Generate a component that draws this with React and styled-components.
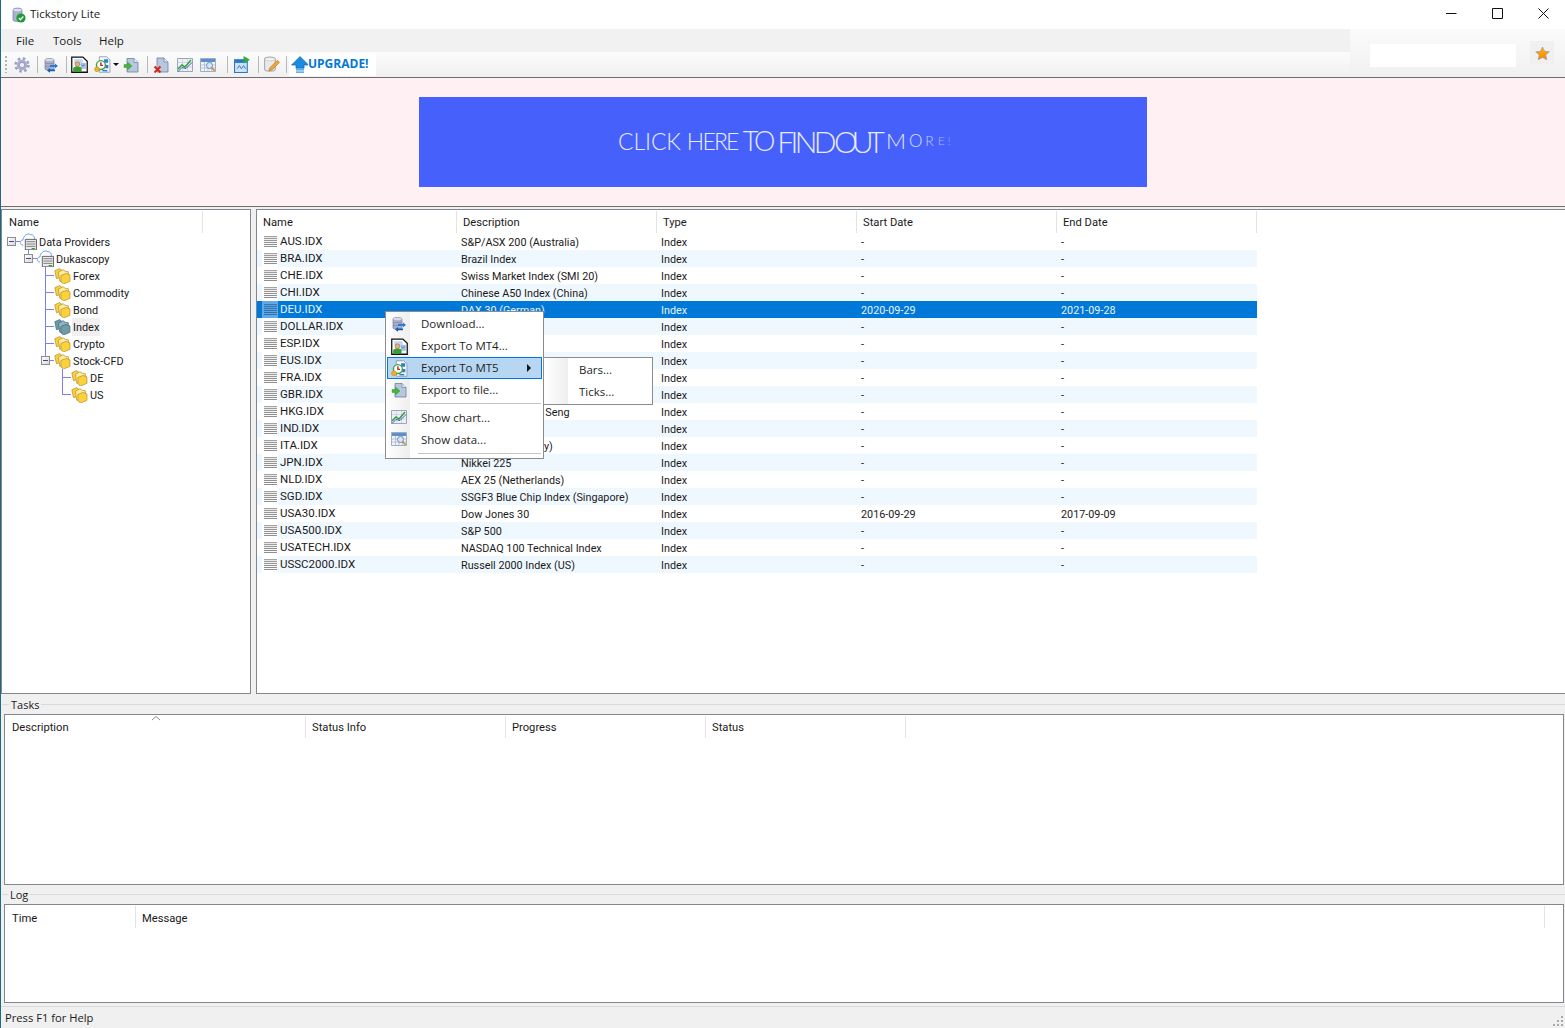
import React from "react";
import styled, { createGlobalStyle } from "styled-components";

const GlobalStyle = createGlobalStyle`
  html, body {
    margin: 0;
    padding: 0;
    background: #f0f0f0;
  }
  * {
    box-sizing: border-box;
  }
`;

const uiFont = `"Open Sans", "Liberation Sans", sans-serif`;

const Window = styled.div`
  position: relative;
  width: 1565px;
  height: 1028px;
  display: flex;
  flex-direction: column;
  overflow: hidden;
  border-left: 1px solid #1d6b82;
  background: #f0f0f0;
  color: #1a1a1a;
  font-family: Roboto, "Liberation Sans", sans-serif;
  font-size: 11.2px;
  line-height: 17px;
`;

const TitleBar = styled.div`
  height: 29px;
  flex: none;
  display: flex;
  align-items: center;
  padding-left: 10px;
  background: #fff;
`;

const AppTitle = styled.span`
  margin-left: 3px;
  font-family: ${uiFont};
  font-size: 11.5px;
  margin-top: -2px;
`;

const WindowButtons = styled.div`
  margin-left: auto;
  display: flex;
  margin-top: -2px;
`;

const WindowButton = styled.div`
  width: 46px;
  height: 24px;
  display: flex;
  align-items: center;
  justify-content: center;
  margin-right: ${(p) => p.$mr || 0}px;
`;

const TopArea = styled.div`
  height: 49px;
  flex: none;
  display: flex;
  border-bottom: 1px solid #6d6d6d;
`;

const TopLeft = styled.div`
  flex: 1;
  display: flex;
  flex-direction: column;
`;

const MenuBar = styled.div`
  height: 23px;
  flex: none;
  display: flex;
  align-items: center;
  padding-left: 15px;
  background: #f1f1f1;
  font-family: ${uiFont};
  font-size: 11.5px;
`;

const MenuLabel = styled.span`
  width: ${(p) => p.$w}px;
`;

const Toolbar = styled.div`
  flex: 1;
  display: flex;
  align-items: center;
  padding-left: 4px;
  background: linear-gradient(#fcfcfc, #f0f0f0);
`;

const Grip = styled.div`
  width: 2px;
  height: 17px;
  margin-right: 3px;
  background: repeating-linear-gradient(#b4b4b4 0 2px, transparent 2px 4px);
`;

const ToolButton = styled.div`
  width: ${(p) => p.$w || 24}px;
  height: 22px;
  display: flex;
  align-items: center;
  justify-content: center;
`;

const Caret = styled.div`
  width: 6px;
  height: 3px;
  border-left: 3px solid transparent;
  border-right: 3px solid transparent;
  border-top: 3px solid #111;
`;

const ToolSep = styled.div`
  width: 1px;
  height: 17px;
  margin-left: ${(p) => p.$ml}px;
  margin-right: ${(p) => p.$mr}px;
  background: #b9b9b9;
`;

const UpgradeButton = styled.div`
  width: 87px;
  height: 22px;
  display: flex;
  align-items: center;
  padding-left: 2px;
  background: #fff;
  color: #0078d7;
  font-family: ${uiFont};
  font-size: 12px;
  font-weight: 700;
`;

const UpgradeLabel = styled.span`
  margin-top: -2px;
`;

const TopRight = styled.div`
  width: 215px;
  flex: none;
  display: flex;
  padding: 15px 0 0 20px;
  background: linear-gradient(#fbfbfb, #f0f0f0);
`;

const SearchBox = styled.div`
  width: 146px;
  height: 23px;
  background: #fff;
`;

const StarButton = styled.div`
  width: 24px;
  height: 23px;
  margin: -3px 0 0 14px;
  padding: 2px 0 0 1px;
  display: flex;
  align-items: center;
  justify-content: center;
  background: #f0f0f0;
`;

const Banner = styled.div`
  height: 129px;
  flex: none;
  display: flex;
  justify-content: center;
  padding-top: 19px;
  background: #fff0f4;
  border-bottom: 1px solid #6d6d6d;
`;

const BannerAd = styled.div`
  width: 728px;
  height: 90px;
  display: flex;
  align-items: center;
  padding: 0 0 2px 199px;
  background: #4560fb;
  color: #e8ebff;
  font-family: "Lato", "Open Sans", sans-serif;
  font-weight: 300;
  white-space: nowrap;
  line-height: 30px;
`;

const AdWord = styled.span`
  font-size: ${(p) => p.$size}px;
  letter-spacing: ${(p) => p.$track}px;
  margin-right: ${(p) => p.$gap}px;
  opacity: ${(p) => p.$fade || 1};
`;

const SplitArea = styled.div`
  height: 487px;
  flex: none;
  display: flex;
  gap: 5px;
  padding-top: 2px;
  margin-right: -2px;
`;

const Panel = styled.div`
  display: flex;
  flex-direction: column;
  background: #fff;
  border: 1px solid #82878f;
  width: ${(p) => (p.$w ? `${p.$w}px` : "auto")};
  flex: ${(p) => (p.$w ? "none" : "1")};
  overflow: hidden;
`;

const BoxPanel = styled.div`
  height: ${(p) => p.$h}px;
  flex: none;
  margin-right: 1px;
  background: #fff;
  border: 1px solid #82878f;
  overflow: hidden;
`;

const HeaderRow = styled.div`
  height: 23px;
  flex: none;
  display: flex;
  position: relative;
`;

const HeaderCell = styled.div`
  width: ${(p) => p.$w}px;
  flex: none;
  padding-left: ${(p) => p.$pl || 6}px;
  margin-top: 1px;
  padding-top: ${(p) => p.$pt || 3}px;
  border-right: 1px solid #e3e3e3;
`;

const SortMark = styled.svg`
  position: absolute;
  left: 146px;
  top: 0;
`;

const TreeBody = styled.div`
  display: flex;
  flex-direction: column;
  padding-left: 1px;
  font-size: 10.9px;
`;

const TreeRow = styled.div`
  height: 17px;
  display: flex;
  align-items: center;
`;

const Guide = styled.span`
  position: relative;
  width: 17px;
  height: 17px;
  flex: none;
  &::before {
    content: "";
    display: ${(p) => (p.$up ? "block" : "none")};
    position: absolute;
    left: 8px;
    top: 0;
    width: 1px;
    height: ${(p) => (p.$down ? 17 : 9)}px;
    background: #7f7ff0;
  }
  &::after {
    content: "";
    display: ${(p) => (p.$branch ? "block" : "none")};
    position: absolute;
    left: 8px;
    top: 8px;
    width: 9px;
    height: 1px;
    background: #7f7ff0;
  }
`;

const ExpandBox = styled.span`
  position: absolute;
  z-index: 1;
  left: 4px;
  top: 4px;
  width: 9px;
  height: 9px;
  border: 1px solid #8d8d8d;
  background: linear-gradient(135deg, #fff, #d8d8d8);
  &::after {
    content: "";
    position: absolute;
    left: 1px;
    top: 3px;
    width: 5px;
    height: 1px;
    background: #3b4b8c;
  }
`;

const TreeLabel = styled.span`
  margin-left: 1px;
  padding: 1px 1px 0;
  background: ${(p) => (p.$active ? "#f0f0f0" : "transparent")};
`;

const ListBody = styled.div`
  display: flex;
  flex-direction: column;
  width: 1000px;
`;

const ListRow = styled.div`
  height: 17px;
  display: grid;
  grid-template-columns: repeat(5, 200px);
  background: ${(p) => (p.$selected ? "#0078d7" : p.$stripe ? "#f0f8ff" : "#fff")};
  color: ${(p) => (p.$selected ? "#e6f2fb" : "#1a1a1a")};
`;

const NameCell = styled.div`
  display: flex;
  align-items: center;
  padding-left: 5px;
`;

const RowIcon = styled.span`
  width: 16px;
  height: 17px;
  display: flex;
  align-items: center;
  justify-content: center;
  background: ${(p) => (p.$selected ? "#66a8e3" : "#fff")};
`;

const RowName = styled.span`
  margin-left: 2px;
  margin-top: -1px;
  font-size: 11.5px;
`;

const ListCell = styled.div`
  padding: 1px 0 0 4px;
  font-size: 10.8px;
  white-space: nowrap;
  overflow: hidden;
`;

const Group = styled.div`
  flex: none;
  display: flex;
  flex-direction: column;
  padding-left: 3px;
`;

const GroupTitle = styled.div`
  height: ${(p) => p.$h}px;
  display: flex;
  align-items: center;
  margin-left: -2px;
`;

const GroupLabel = styled.span`
  padding: 0 2px;
  font-family: ${uiFont};
  font-size: 11px;
`;

const GroupLine = styled.div`
  height: 1px;
  width: ${(p) => (p.$w ? `${p.$w}px` : "auto")};
  flex: ${(p) => (p.$w ? "none" : "1")};
  background: #d9d9d9;
`;

const StatusBar = styled.div`
  flex: 1;
  display: flex;
  align-items: center;
  padding-left: 4px;
  margin-top: 3px;
  position: relative;
  border-top: 1px solid #d9d9d9;
  font-family: ${uiFont};
  font-size: 11.2px;
`;

const ResizeGrip = styled.svg`
  position: absolute;
  right: 1px;
  bottom: 1px;
`;

const ContextMenu = styled.div`
  position: absolute;
  z-index: ${(p) => p.$z};
  left: ${(p) => p.$x}px;
  top: ${(p) => p.$y}px;
  width: ${(p) => p.$w}px;
  padding: 1px;
  border: 1px solid #8c8c8c;
  background: linear-gradient(90deg, #fff, #eeeeee 24px, #fff 24px);
  color: #1f1f1f;
  font-family: ${uiFont};
  font-size: 11.5px;
`;

const ContextItem = styled.div`
  height: 22px;
  display: flex;
  align-items: center;
  position: relative;
  padding-left: ${(p) => p.$pl}px;
  padding-bottom: ${(p) => (p.$lift ? 2 : 0)}px;
  border: 1px solid ${(p) => (p.$hot ? "#0078d7" : "transparent")};
  background: ${(p) => (p.$hot ? "#b6d6f2" : "transparent")};
`;

const ItemIcon = styled.span`
  position: absolute;
  left: 3px;
  top: 2px;
  width: 16px;
  height: 16px;
`;

const ItemArrow = styled.span`
  position: absolute;
  right: 10px;
  top: 6px;
  border-top: 4px solid transparent;
  border-bottom: 4px solid transparent;
  border-left: 4px solid #111;
`;

const ContextSep = styled.div`
  height: 1px;
  margin: ${(p) => p.$my}px 1px ${(p) => p.$my}px 31px;
  background: #c4c4c4;
`;

/* toolbar and tree pictures, all on a 16 unit grid */
const Pic = ({ children, size = 16 }) => (
  <svg width={size} height={size} viewBox="0 0 16 16" style={{ display: "block", flex: "none" }}>
    {children}
  </svg>
);

const GearIcon = () => (
  <Pic>
    <circle cx="8" cy="8" r="6.400" fill="none" stroke="#9c9ec4" strokeWidth="2.600" strokeDasharray="2.500 2.530" />
    <circle cx="8" cy="8" r="5.200" fill="#a9abd0" />
    <circle cx="8" cy="8" r="2.600" fill="#f2f2f6" stroke="#8587ab" strokeWidth=".7" />
  </Pic>
);

const DbIcon = () => (
  <Pic>
    <path d="M2 3c0-2 9-2 9 0v9c0 1.600-9 1.600-9 0z" fill="#a9adc9" stroke="#7a7ea0" strokeWidth=".7" />
    <ellipse cx="6.500" cy="3" rx="4.200" ry="1.200" fill="#d8dae8" />
    <path d="M2 6.500h9M2 9.500h9" stroke="#8488aa" strokeWidth=".7" />
    <path d="M7 8h5V6.500l3 2.400-3 2.400V9.800H7z" fill="#1e78d2" />
    <path d="M12 12.500H7V11l-3 2.400 3 2.400v-1.500h5z" fill="#0c5fb0" />
  </Pic>
);

const Mt4Icon = () => (
  <Pic size={17}>
    <path d="M.7 1h10.500l4.100 4v10.300H.7z" fill="#fff" stroke="#111" strokeWidth="1.200" />
    <path d="M3 3h8v4H3z" fill="#c2d7ef" />
    <path d="M9 6.500h5V12H9z" fill="#9fc0e3" />
    <path d="M9.500 8l1.500 1.500L13 8" fill="none" stroke="#3f6fb0" strokeWidth=".7" />
    <circle cx="6" cy="7.700" r="2.200" fill="#e5b27c" stroke="#845a33" strokeWidth=".5" />
    <path d="M2 15v-3.200c0-1.400 1.800-2 4-2s4 .6 4 2V15z" fill="#3f9a33" />
  </Pic>
);

const Mt5Icon = () => (
  <Pic size={17}>
    <path d="M5 .7h7l3 3v11.600H5z" fill="#f5f7fb" stroke="#8f97ad" strokeWidth=".8" />
    <path d="M9.500 3h3.800v3.400H9.500zM10.500 8.500h3v3h-3z" fill="#2d7ed2" />
    <circle cx="6.500" cy="8.500" r="4.200" fill="#fff" stroke="#3aa243" strokeWidth="1.300" />
    <path d="M6.500 5.800v3h2" fill="none" stroke="#c5261b" strokeWidth="1.300" />
    <circle cx="2.800" cy="12.500" r="2.300" fill="#eeb520" stroke="#b5781a" strokeWidth=".4" />
    <path d="M8 13.800h4.500" stroke="#2d7ed2" strokeWidth="1.400" />
  </Pic>
);

const ExportIcon = () => (
  <Pic>
    <path d="M4 1.500h7l4 4v9.500H4z" fill="#b6c7e0" stroke="#6f7f9d" strokeWidth=".8" />
    <path d="M11 1.500v4h4" fill="#e4eaf4" stroke="#6f7f9d" strokeWidth=".7" />
    <path d="M1 7.500h3.500V5L9 9l-4.500 4v-2.500H1z" fill="#47b53a" stroke="#2e8a28" strokeWidth=".4" />
  </Pic>
);

const DeleteIcon = () => (
  <Pic>
    <path d="M4 1h7l4 4v10H4z" fill="#b6c7e0" stroke="#6f7f9d" strokeWidth=".8" />
    <path d="M11 1v4h4" fill="#e4eaf4" stroke="#6f7f9d" strokeWidth=".7" />
    <path d="M1.500 9.500l6 6M7.500 9.500l-6 6" stroke="#d92416" strokeWidth="2" />
  </Pic>
);

const ChartIcon = () => (
  <Pic>
    <path d="M.5 1.500h15v13H.5z" fill="#eef0f6" stroke="#8b90ac" strokeWidth=".8" />
    <path d="M1 5.500h14M1 10h14M5.500 2v12M10.500 2v12" stroke="#c6cade" strokeWidth=".7" />
    <path d="M1 12l4-4 3 2 6-7" fill="none" stroke="#2a9d34" strokeWidth="1.400" />
    <path d="M1 14.500l4-4 4 1 6-6" fill="none" stroke="#2a62bd" strokeWidth="1" />
  </Pic>
);

const TableIcon = () => (
  <Pic>
    <path d="M.5 1.500h15v13H.5z" fill="#f0f3f9" stroke="#8b9ab8" strokeWidth=".8" />
    <path d="M1 2h14v3H1z" fill="#5d8fc9" />
    <path d="M1 8h14M1 11h14M4.500 5v9M8 5v9M11.500 5v9" stroke="#a5b2cc" strokeWidth=".7" />
    <circle cx="9.500" cy="8.500" r="3" fill="#d4e7f8" stroke="#6f8fb5" />
    <path d="M11.500 10.500l3.200 3.200" stroke="#d9832a" strokeWidth="1.600" />
  </Pic>
);

const ShowIcon = () => (
  <Pic size={17}>
    <path d="M.5 3.500h12v12H.5z" fill="#cfe2f5" stroke="#2b78c9" />
    <path d="M1 3.500h11v3H1z" fill="#2b78c9" />
    <path d="M3 12l2-3 2 3 2-3 2 3" fill="none" stroke="#2b78c9" strokeWidth=".9" />
    <path d="M9 0v7l6-3.500z" fill="#2eab3c" />
  </Pic>
);

const NoteIcon = () => (
  <Pic size={17}>
    <path d="M1.500 3c0-2.600 10-2.600 10 0v9.500c0 2.500-10 2.500-10 0z" fill="#e9e9e9" stroke="#a9a9a9" />
    <ellipse cx="6.500" cy="3" rx="4.600" ry="1.500" fill="#f8f8f8" stroke="#bdbdbd" strokeWidth=".6" />
    <path d="M5.500 14l1-3 7-7 2 2-7 7z" fill="#eda637" stroke="#b5761c" strokeWidth=".6" />
  </Pic>
);

const UpIcon = () => (
  <Pic size={17}>
    <path d="M8.500.5l8 8h-4.200v3H4.700v-3H.5z" fill="#1a8bdf" stroke="#0b5fae" strokeWidth=".6" />
    <path d="M4.700 12.500h7.600v1.200H4.700zM4.700 14.600h7.600v1.200H4.700z" fill="#2e97e6" />
  </Pic>
);

const AppIcon = () => (
  <Pic>
    <path d="M2 3c0-2.600 9-2.600 9 0v10c0 2-9 2-9 0z" fill="#aab0cf" stroke="#7c82a4" strokeWidth=".7" />
    <ellipse cx="6.500" cy="3" rx="4.200" ry="1.300" fill="#dddfee" />
    <circle cx="10" cy="11" r="4.600" fill="#1d9b35" />
    <path d="M7.800 11l1.600 1.700 2.900-3.200" fill="none" stroke="#fff" strokeWidth="1.300" />
  </Pic>
);

const StarIcon = () => (
  <Pic size={15}>
    <defs>
      <linearGradient id="star" x1="0" y1="0" x2="0" y2="1">
        <stop offset="0" stopColor="#ffb31a" />
        <stop offset="1" stopColor="#f28a00" />
      </linearGradient>
    </defs>
    <path d="M8 1l2.200 4.600 5 .6-3.700 3.400 1 5L8 12.200l-4.500 2.400 1-5L.8 6.200l5-.6z" fill="url(#star)" stroke="#8f8f9a" strokeWidth=".6" />
  </Pic>
);

const CloudIcon = () => (
  <Pic size={17}>
    <path d="M3 11.500C-.5 11.500-.5 6.500 2.800 6.500 3 3 7-.5 10 1.500c2.500 0 4 2 3.500 4.500 1.500.5 2 2 2 3" fill="#fff" stroke="#5f9be6" strokeWidth=".9" />
    <path d="M5 6h10.500v9.800H5z" fill="#ececec" stroke="#4d4d4d" strokeWidth=".8" />
    <path d="M6 8.200h8.500M6 10.400h8.500M6 12.600h8.500" stroke="#6d6d6d" strokeWidth=".8" />
    <path d="M11 14.600h3" stroke="#2e9c3a" strokeWidth="1" />
  </Pic>
);

const FolderIcon = ({ tint = "yellow" }) => {
  const fill = tint === "yellow" ? "#fbd13c" : "#6f9aa8";
  const dark = tint === "yellow" ? "#b8912a" : "#466a78";
  const light = tint === "yellow" ? "#ffeb9a" : "#8fb4bf";
  return (
    <Pic size={17}>
      <path d="M.8 3.500l4.500-2 2 1.500v6.500l-5 1.500z" fill={fill} stroke={dark} strokeWidth=".7" />
      <path d="M4 5l4.500-2.500 2 1.500 3 .5v6l-8 3z" fill={light} stroke={dark} strokeWidth=".7" />
      <path d="M6.500 8l5-2 3.500 1.500v6L9 16l-2.500-2z" fill={fill} stroke={dark} strokeWidth=".7" />
    </Pic>
  );
};

const LinesIcon = ({ color = "#8a8a8a" }) => (
  <Pic size={13}>
    {[1.500, 3.900, 6.300, 8.700, 11.100, 13.500].map((y) => (
      <rect key={y} x="0" y={y} width="16" height="1.200" fill={color} />
    ))}
  </Pic>
);

// descriptions that the open menu covers completely are left blank
const rows = [
  ["AUS.IDX", "S&P/ASX 200 (Australia)", "-", "-"],
  ["BRA.IDX", "Brazil Index", "-", "-"],
  ["CHE.IDX", "Swiss Market Index (SMI 20)", "-", "-"],
  ["CHI.IDX", "Chinese A50 Index (China)", "-", "-"],
  ["DEU.IDX", "DAX 30 (German)", "2020-09-29", "2021-09-28"],
  ["DOLLAR.IDX", "", "-", "-"],
  ["ESP.IDX", "", "-", "-"],
  ["EUS.IDX", "", "-", "-"],
  ["FRA.IDX", "", "-", "-"],
  ["GBR.IDX", "", "-", "-"],
  ["HKG.IDX", "Hong Kong Hang Seng", "-", "-"],
  ["IND.IDX", "", "-", "-"],
  ["ITA.IDX", "FTSE MIB 40 (Italy)", "-", "-"],
  ["JPN.IDX", "Nikkei 225", "-", "-"],
  ["NLD.IDX", "AEX 25 (Netherlands)", "-", "-"],
  ["SGD.IDX", "SSGF3 Blue Chip Index (Singapore)", "-", "-"],
  ["USA30.IDX", "Dow Jones 30", "2016-09-29", "2017-09-09"],
  ["USA500.IDX", "S&P 500", "-", "-"],
  ["USATECH.IDX", "NASDAQ 100 Technical Index", "-", "-"],
  ["USSC2000.IDX", "Russell 2000 Index (US)", "-", "-"],
];

// guides: one entry per indent level
const treeRows = [
  { label: "Data Providers", guides: ["box"], icon: "cloud" },
  { label: "Dukascopy", guides: ["", "upbox"], icon: "cloud" },
  { label: "Forex", guides: ["", "", "tee"] },
  { label: "Commodity", guides: ["", "", "tee"] },
  { label: "Bond", guides: ["", "", "tee"] },
  { label: "Index", guides: ["", "", "tee"], tint: "teal", active: true },
  { label: "Crypto", guides: ["", "", "tee"] },
  { label: "Stock-CFD", guides: ["", "", "upbox"] },
  { label: "DE", guides: ["", "", "", "tee"] },
  { label: "US", guides: ["", "", "", "elbow"] },
];

const TreeGuide = ({ kind }) => {
  if (kind === "box") return <Guide $branch><ExpandBox /></Guide>;
  if (kind === "upbox") return <Guide $up $branch><ExpandBox /></Guide>;
  if (kind === "tee") return <Guide $up $down $branch />;
  if (kind === "elbow") return <Guide $up $branch />;
  return <Guide />;
};

const menuItems = [
  { label: "Download...", icon: <DbIcon /> },
  { label: "Export To MT4...", icon: <Mt4Icon /> },
  { label: "Export To MT5", icon: <Mt5Icon />, hot: true },
  { label: "Export to file...", icon: <ExportIcon /> },
];

const App = () => {
  return (
    <Window>
      <GlobalStyle />
      <TitleBar>
        <AppIcon />
        <AppTitle>Tickstory Lite</AppTitle>
        <WindowButtons>
          <WindowButton>
            <svg width="11" height="11" viewBox="0 0 11 11"><path d="M0 5.500h10.500" stroke="#111" /></svg>
          </WindowButton>
          <WindowButton>
            <svg width="11" height="11" viewBox="0 0 11 11"><path d="M.5.500h10v10H.5z" fill="none" stroke="#111" /></svg>
          </WindowButton>
          <WindowButton $mr={-1}>
            <svg width="11" height="11" viewBox="0 0 11 11"><path d="M.5.500l10 10M10.500.500l-10 10" stroke="#111" /></svg>
          </WindowButton>
        </WindowButtons>
      </TitleBar>

      <TopArea>
        <TopLeft>
          <MenuBar>
            <MenuLabel $w={37}>File</MenuLabel>
            <MenuLabel $w={46}>Tools</MenuLabel>
            <MenuLabel $w={40}>Help</MenuLabel>
          </MenuBar>
          <Toolbar>
            <Grip />
            <ToolButton><GearIcon /></ToolButton>
            <ToolSep $ml={3} $mr={1} />
            <ToolButton><DbIcon /></ToolButton>
            <ToolSep $ml={3} $mr={1} />
            <ToolButton $w={23}><Mt4Icon /></ToolButton>
            <ToolButton $w={22}><Mt5Icon /></ToolButton>
            <Caret />
            <ToolButton><ExportIcon /></ToolButton>
            <ToolSep $ml={4} $mr={1} />
            <ToolButton><DeleteIcon /></ToolButton>
            <ToolButton $w={23}><ChartIcon /></ToolButton>
            <ToolButton><TableIcon /></ToolButton>
            <ToolSep $ml={7} $mr={2} />
            <ToolButton><ShowIcon /></ToolButton>
            <ToolSep $ml={4} $mr={0} />
            <ToolButton><NoteIcon /></ToolButton>
            <ToolSep $ml={3} $mr={2} />
            <UpgradeButton>
              <UpIcon />
              <UpgradeLabel>UPGRADE!</UpgradeLabel>
            </UpgradeButton>
          </Toolbar>
        </TopLeft>
        <TopRight>
          <SearchBox />
          <StarButton><StarIcon /></StarButton>
        </TopRight>
      </TopArea>

      <Banner>
        <BannerAd>
          <AdWord $size={23} $track={-0.1} $gap={6}>CLICK</AdWord>
          <AdWord $size={23} $track={-1.8} $gap={5}>HERE</AdWord>
          <AdWord $size={27} $track={-3.2} $gap={5}>TO</AdWord>
          <AdWord $size={30} $track={-3.6} $gap={1}>FIND</AdWord>
          <AdWord $size={30} $track={-6} $gap={7}>OUT</AdWord>
          <AdWord $size={22} $track={3} $gap={0}>M</AdWord>
          <AdWord $size={17} $track={3} $gap={0} $fade={0.9}>O</AdWord>
          <AdWord $size={14} $track={4} $gap={0} $fade={0.8}>R</AdWord>
          <AdWord $size={12} $track={3} $gap={0} $fade={0.6}>E</AdWord>
          <AdWord $size={11} $track={0} $gap={0} $fade={0.5}>!</AdWord>
        </BannerAd>
      </Banner>

      <SplitArea>
        <Panel $w={250}>
          <HeaderRow>
            <HeaderCell $w={201} $pl={7}>Name</HeaderCell>
          </HeaderRow>
          <TreeBody>
            {treeRows.map((row) => (
              <TreeRow key={row.label}>
                {row.guides.map((g, i) => <TreeGuide key={i} kind={g} />)}
                {row.icon === "cloud" ? <CloudIcon /> : <FolderIcon tint={row.tint} />}
                <TreeLabel $active={row.active}>{row.label}</TreeLabel>
              </TreeRow>
            ))}
          </TreeBody>
        </Panel>
        <Panel>
          <HeaderRow>
            {["Name", "Description", "Type", "Start Date", "End Date"].map((h) => (
              <HeaderCell key={h} $w={200}>{h}</HeaderCell>
            ))}
          </HeaderRow>
          <ListBody>
            {rows.map((row, i) => {
              const selected = row[0] === "DEU.IDX";
              return (
                <ListRow key={row[0]} $selected={selected} $stripe={i % 2 === 1}>
                  <NameCell>
                    <RowIcon $selected={selected}>
                      <LinesIcon color={selected ? "#2a6fae" : "#8a8a8a"} />
                    </RowIcon>
                    <RowName>{row[0]}</RowName>
                  </NameCell>
                  <ListCell>{row[1]}</ListCell>
                  <ListCell>Index</ListCell>
                  <ListCell>{row[2]}</ListCell>
                  <ListCell>{row[3]}</ListCell>
                </ListRow>
              );
            })}
          </ListBody>
        </Panel>
      </SplitArea>

      <Group>
        <GroupTitle $h={20}>
          <GroupLine $w={7} />
          <GroupLabel>Tasks</GroupLabel>
          <GroupLine />
        </GroupTitle>
        <BoxPanel $h={171}>
          <HeaderRow>
            <SortMark width="10" height="6" viewBox="0 0 10 6">
              <path d="M1 5l4-3.500 4 3.500" fill="none" stroke="#8a8a8a" />
            </SortMark>
            <HeaderCell $w={301} $pl={7}>Description</HeaderCell>
            <HeaderCell $w={200}>Status Info</HeaderCell>
            <HeaderCell $w={200}>Progress</HeaderCell>
            <HeaderCell $w={200}>Status</HeaderCell>
          </HeaderRow>
        </BoxPanel>
      </Group>

      <Group>
        <GroupTitle $h={19}>
          <GroupLine $w={6} />
          <GroupLabel>Log</GroupLabel>
          <GroupLine />
        </GroupTitle>
        <BoxPanel $h={99}>
          <HeaderRow>
            <HeaderCell $w={131} $pl={7} $pt={4}>Time</HeaderCell>
            <HeaderCell $w={1409} $pt={4}>Message</HeaderCell>
          </HeaderRow>
        </BoxPanel>
      </Group>

      <StatusBar>
        Press F1 for Help
        <ResizeGrip width="12" height="12" viewBox="0 0 12 12">
          <path d="M9 1h2v2H9zM5 5h2v2H5zM9 5h2v2H9zM1 9h2v2H1zM5 9h2v2H5zM9 9h2v2H9z" fill="#a9a9a9" />
        </ResizeGrip>
      </StatusBar>

      <ContextMenu $z={3} $x={384} $y={311} $w={159}>
        {menuItems.map((item) => (
          <ContextItem key={item.label} $hot={item.hot} $pl={33} $lift>
            <ItemIcon>{item.icon}</ItemIcon>
            {item.label}
            {item.hot && <ItemArrow />}
          </ContextItem>
        ))}
        <ContextSep $my={2} />
        <ContextItem $pl={33}><ItemIcon><ChartIcon /></ItemIcon>Show chart...</ContextItem>
        <ContextItem $pl={33}><ItemIcon><TableIcon /></ItemIcon>Show data...</ContextItem>
        <ContextSep $my={3} />
      </ContextMenu>
      <ContextMenu $z={2} $x={542} $y={357} $w={110}>
        <ContextItem $pl={33} $lift>Bars...</ContextItem>
        <ContextItem $pl={33} $lift>Ticks...</ContextItem>
      </ContextMenu>
    </Window>
  );
};

export default App;
